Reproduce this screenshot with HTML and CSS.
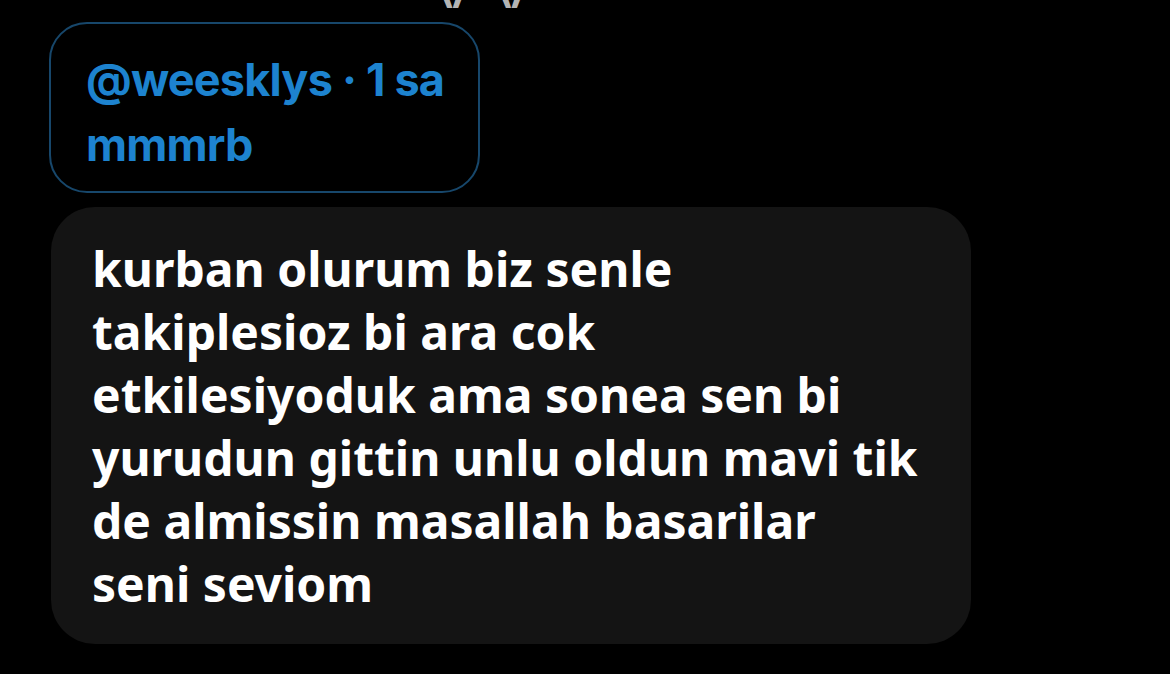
FILE: index.html
```html
<!DOCTYPE html>
<html lang="tr">
<head>
    <meta charset="UTF-8">
    <meta name="viewport" content="width=device-width, initial-scale=1.0">
    <title>Yanıt</title>
    <link rel="stylesheet" href="styles.css">
</head>
<body>
    <div class="page">
        <div class="prev-line">y<span class="gap"></span>y</div>

        <div class="reply-tag">
            <div class="reply-meta">@weesklys · 1 sa</div>
            <div class="reply-name">mmmrb</div>
        </div>

        <div class="bubble">
            <p class="bubble-text">kurban olurum biz senle<br>takiplesioz bi ara cok<br>etkilesiyoduk ama sonea sen bi<br>yurudun gittin unlu oldun mavi tik<br>de almissin masallah basarilar<br>seni seviom</p>
        </div>
    </div>
</body>
</html>
```

FILE: styles.css
```css
body {
    margin: 0;
    padding: 0;
    background-color: #000;
    height: 674px;
    overflow: hidden;
}

.page {
    padding-left: 49px;
    display: flex;
    flex-direction: column;
    align-items: flex-start;
}

/* descenders of the line above, cut by the top edge */
.prev-line {
    height: 8px;
    margin-left: 392px;
    overflow: hidden;
    font-family: "Noto Sans", sans-serif;
    font-weight: 700;
    font-size: 40px;
    line-height: 0;
    color: #b4b4b4;
    display: flex;
}

.prev-line .gap {
    width: 36px;
}

.reply-tag {
    margin-top: 14px;
    width: 427px;
    height: 167px;
    box-sizing: content-box;
    border: 2px solid #17476b;
    border-radius: 38px;
    font-family: "Inter", sans-serif;
    font-weight: 700;
    font-size: 45px;
    line-height: 65px;
    color: #1d83cf;
    letter-spacing: -0.8px;
}

.reply-meta {
    padding: 23px 0 0 35px;
}

.reply-name {
    padding-left: 35px;
}

.bubble {
    margin-top: 14px;
    margin-left: 2px;
    width: 920px;
    height: 437px;
    background-color: #141414;
    border-radius: 44px;
}

.bubble-text {
    margin: 0;
    padding: 30px 0 0 41px;
    font-family: "Noto Sans", sans-serif;
    font-weight: 700;
    font-size: 48px;
    line-height: 63px;
    color: #fff;
}
```
